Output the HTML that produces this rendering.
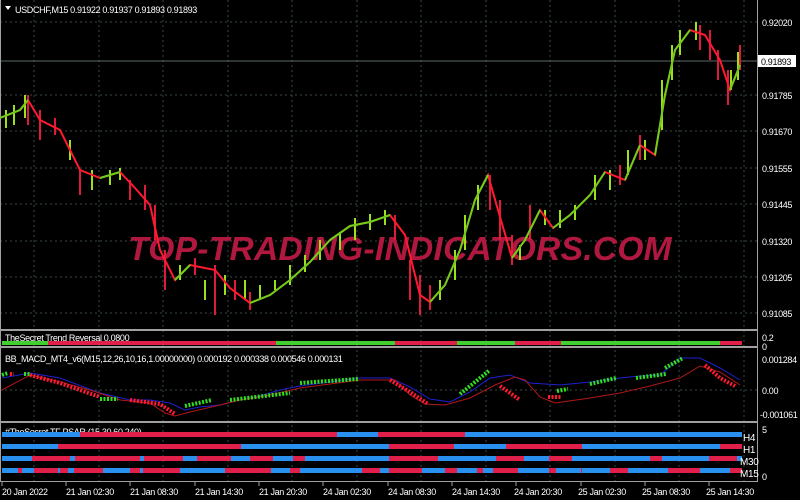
<!DOCTYPE html>
<html><head><meta charset="utf-8"><style>
body{margin:0;background:#000;width:800px;height:500px;overflow:hidden;font-family:"Liberation Sans",sans-serif}
svg{display:block}
text{font-family:"Liberation Sans",sans-serif;font-size:9px;letter-spacing:-0.35px;fill:#fff}
</style></head><body>
<svg width="800" height="500" viewBox="0 0 800 500">
<rect width="800" height="500" fill="#000"/>
<g stroke="#3a4a48" stroke-width="1" stroke-dasharray="2,3">
<path d="M34 0V482M99 0V482M163 0V482M228 0V482M292 0V482M357 0V482M421 0V482M486 0V482M550 0V482M615 0V482M679 0V482M744 0V482"/>
<path d="M0 22H757M0 95H757M0 131H757M0 168H757M0 204H757M0 241H757M0 277H757M0 313H757M0 390H757"/>
</g>
<line x1="0" y1="61" x2="757" y2="61" stroke="#5a6a68"/>
<g fill="#a0a0a0">
<rect x="0" y="329" width="757" height="2"/>
<rect x="0" y="346" width="757" height="2"/>
<rect x="0" y="421" width="757" height="2"/>
<rect x="757" y="0" width="1" height="482"/>
<rect x="0" y="0" width="1" height="482"/>
<rect x="0" y="481" width="758" height="1"/>
</g>
<text x="400" y="260" text-anchor="middle" style="font-size:33.5px;letter-spacing:0.3px;font-weight:bold;font-style:italic;fill:#b01840">TOP-TRADING-INDICATORS.COM</text>
<g stroke-width="2">
<path stroke="#9be01a" d="M6 110V128M14 105V125M25 95V118M70 140V160M92 170V190M110 170V185M120 168V180M180 265V280M205 280V300M225 275V295M245 280V300M260 285V300M275 280V290M290 265V285M305 255V272M320 240V260M340 232V250M355 218V240M370 214V230M385 210V225M440 280V300M455 250V280M465 215V250M478 185V210M520 245V260M545 210V225M560 210V228M575 205V220M595 175V200M610 170V190M628 150V175M645 140V160M662 80V130M672 45V80M680 30V55M696 22V40M731 70V90M738 52V80"/>
<path stroke="#e01a3a" d="M28 95V125M40 110V140M55 118V135M80 170V195M130 180V200M145 185V210M155 205V240M165 250V290M195 258V275M215 265V315M235 280V300M250 292V310M395 215V240M410 260V300M420 275V315M430 285V310M490 175V210M500 200V240M512 235V265M530 205V240M620 165V185M640 135V160M700 25V50M710 30V60M718 50V80M728 70V105M740 45V70"/>
</g>
<polyline fill="none" stroke="#ff1a30" stroke-width="2" points="0,118 20,110 28,100 40,120 60,130 80,170 100,178 120,172 135,188 150,205 160,250 175,280 190,265 215,270 230,288 250,303 270,295 290,280 310,262 330,240 350,226 370,222 390,215 405,235 420,295 430,302 445,285 460,250 475,200 488,175 498,210 512,258 525,240 540,210 553,228 570,215 590,195 605,172 625,180 640,145 655,155 665,95 675,50 690,30 705,35 720,60 730,90 740,65"/>
<g fill="none" stroke="#6bd01a" stroke-width="2">
<polyline points="0,118 20,110 28,100"/>
<polyline points="100,178 120,172"/>
<polyline points="175,280 190,265"/>
<polyline points="250,303 270,295 290,280 310,262 330,240 350,226 370,222 390,215"/>
<polyline points="430,302 445,285 460,250 475,200 488,175"/>
<polyline points="512,258 525,240 540,210"/>
<polyline points="553,228 570,215 590,195 605,172"/>
<polyline points="625,180 640,145"/>
<polyline points="655,155 665,95 675,50 690,30"/>
<polyline points="730,90 740,65"/>
</g>
<path d="M5 6h6l-3 4z" fill="#fff"/>
<text x="15" y="13">USDCHF,M15  0.91922 0.91937 0.91893 0.91893</text>
<g>
<text x="762" y="26">0.92020</text>
<rect x="758" y="55" width="38" height="12" fill="#fff"/>
<text x="761" y="65" style="fill:#000">0.91893</text>
<text x="762" y="99">0.91785</text>
<text x="762" y="135">0.91670</text>
<text x="762" y="172">0.91555</text>
<text x="762" y="208">0.91445</text>
<text x="762" y="245">0.91320</text>
<text x="762" y="281">0.91205</text>
<text x="762" y="317">0.91085</text>
<text x="762" y="341">0.2</text>
<text x="762" y="350">0</text>
<text x="762" y="363">0.001284</text>
<text x="762" y="394">0.00</text>
<text x="760" y="418">-0.001061</text>
<text x="762" y="433">5</text>
<text x="762" y="480">0</text>
</g>
<text x="5" y="341">TheSecret Trend Reversal 0.0800</text>
<g>
<rect x="2" y="341" width="740" height="4" fill="#e0204a"/>
<rect x="2" y="341" width="46" height="4" fill="#3fd030"/>
<rect x="276" y="341" width="119" height="4" fill="#3fd030"/>
<rect x="457" y="341" width="58" height="4" fill="#3fd030"/>
<rect x="561" y="341" width="159" height="4" fill="#3fd030"/>
</g>
<text x="5" y="362">BB_MACD_MT4_v6(M15,12,26,10,16,1.00000000) 0.000192 0.000338 0.000546 0.000131</text>
<polyline fill="none" stroke="#2020d0" stroke-width="1" points="2,378 30,373 60,378 100,393 130,400 150,400 170,403 185,410 200,407 220,405 240,400 260,396 280,390 300,386 330,382 360,378 390,378 410,387 430,399 450,402 470,392 490,378 510,375 530,383 560,385 590,382 620,378 640,376 660,375 680,358 700,358 720,368 740,380"/>
<polyline fill="none" stroke="#b01818" stroke-width="1" points="2,390 30,375 60,382 90,390 120,400 150,403 165,413 175,416 190,412 220,405 240,400 270,395 300,388 330,384 360,380 395,380 410,395 425,404 445,405 470,398 495,385 515,377 525,380 540,397 555,403 590,398 620,393 650,386 680,378 700,366 720,372 740,385"/>
<g fill="none" stroke="#30e020" stroke-width="4" stroke-dasharray="2,1.5">
<path d="M2 375L8 373M24 374L30 374"/>
<path d="M100 399L118 399"/>
<path d="M185 406L212 400"/>
<path d="M230 400L290 393"/>
<path d="M300 383L358 379"/>
<path d="M460 394L490 370"/>
<path d="M557 391L568 389"/>
<path d="M590 384L616 378"/>
<path d="M636 378L666 374"/>
<path d="M665 368L683 358"/>
</g>
<g fill="none" stroke="#ff1a30" stroke-width="4" stroke-dasharray="2,1.5">
<path d="M10 374L14 374M30 375L60 383L100 397"/>
<path d="M130 400L160 404L175 414"/>
<path d="M390 380L410 392L428 404"/>
<path d="M500 386L520 400"/>
<path d="M548 397L562 397"/>
<path d="M705 365L720 378L735 386"/>
</g>
<text x="5" y="435">#TheSecret TF PSAR (15,30,60,240)</text>
<g fill="#e0204a">
<rect x="2" y="432" width="740" height="5"/>
<rect x="2" y="444" width="740" height="5"/>
<rect x="2" y="456" width="740" height="5"/>
<rect x="2" y="468" width="740" height="5"/>
</g>
<g fill="#2a90f0">
<rect x="2" y="432" width="78" height="5"/><rect x="337" y="432" width="41" height="5"/><rect x="465" y="432" width="277" height="5"/>
<rect x="2" y="444" width="56" height="5"/><rect x="241" y="444" width="148" height="5"/><rect x="454" y="444" width="52" height="5"/><rect x="582" y="444" width="138" height="5"/>
<rect x="2" y="456" width="30" height="5"/><rect x="70" y="456" width="5" height="5"/><rect x="140" y="456" width="4" height="5"/><rect x="183" y="456" width="14" height="5"/><rect x="231" y="456" width="19" height="5"/><rect x="273" y="456" width="20" height="5"/><rect x="305" y="456" width="84" height="5"/><rect x="438" y="456" width="58" height="5"/><rect x="524" y="456" width="25" height="5"/><rect x="572" y="456" width="78" height="5"/><rect x="662" y="456" width="47" height="5"/><rect x="737" y="456" width="5" height="5"/>
<rect x="2" y="468" width="16" height="5"/><rect x="22" y="468" width="12" height="5"/><rect x="58" y="468" width="2" height="5"/><rect x="68" y="468" width="6" height="5"/><rect x="103" y="468" width="27" height="5"/><rect x="140" y="468" width="3" height="5"/><rect x="180" y="468" width="45" height="5"/><rect x="271" y="468" width="19" height="5"/><rect x="300" y="468" width="62" height="5"/><rect x="380" y="468" width="9" height="5"/><rect x="422" y="468" width="23" height="5"/><rect x="457" y="468" width="20" height="5"/><rect x="483" y="468" width="10" height="5"/><rect x="518" y="468" width="31" height="5"/><rect x="556" y="468" width="25" height="5"/><rect x="582" y="468" width="28" height="5"/><rect x="628" y="468" width="40" height="5"/><rect x="700" y="468" width="30" height="5"/>
</g>
<text x="743" y="441" style="font-size:10px">H4</text>
<text x="743" y="453" style="font-size:10px">H1</text>
<text x="740" y="465" style="font-size:10px">M30</text>
<text x="740" y="477" style="font-size:10px">M15</text>
<g stroke="#a0a0a0"><path d="M2 482v4M66 482v4M130 482v4M195 482v4M259 482v4M323 482v4M388 482v4M452 482v4M516 482v4M581 482v4M645 482v4M709 482v4"/></g>
<g>
<text x="2" y="495">20 Jan 2022</text>
<text x="66" y="495">21 Jan 02:30</text>
<text x="130" y="495">21 Jan 08:30</text>
<text x="195" y="495">21 Jan 14:30</text>
<text x="259" y="495">21 Jan 20:30</text>
<text x="323" y="495">24 Jan 02:30</text>
<text x="388" y="495">24 Jan 08:30</text>
<text x="452" y="495">24 Jan 14:30</text>
<text x="514" y="495">24 Jan 20:30</text>
<text x="578" y="495">25 Jan 02:30</text>
<text x="642" y="495">25 Jan 08:30</text>
<text x="706" y="495">25 Jan 14:30</text>
</g>
</svg>
</body></html>
